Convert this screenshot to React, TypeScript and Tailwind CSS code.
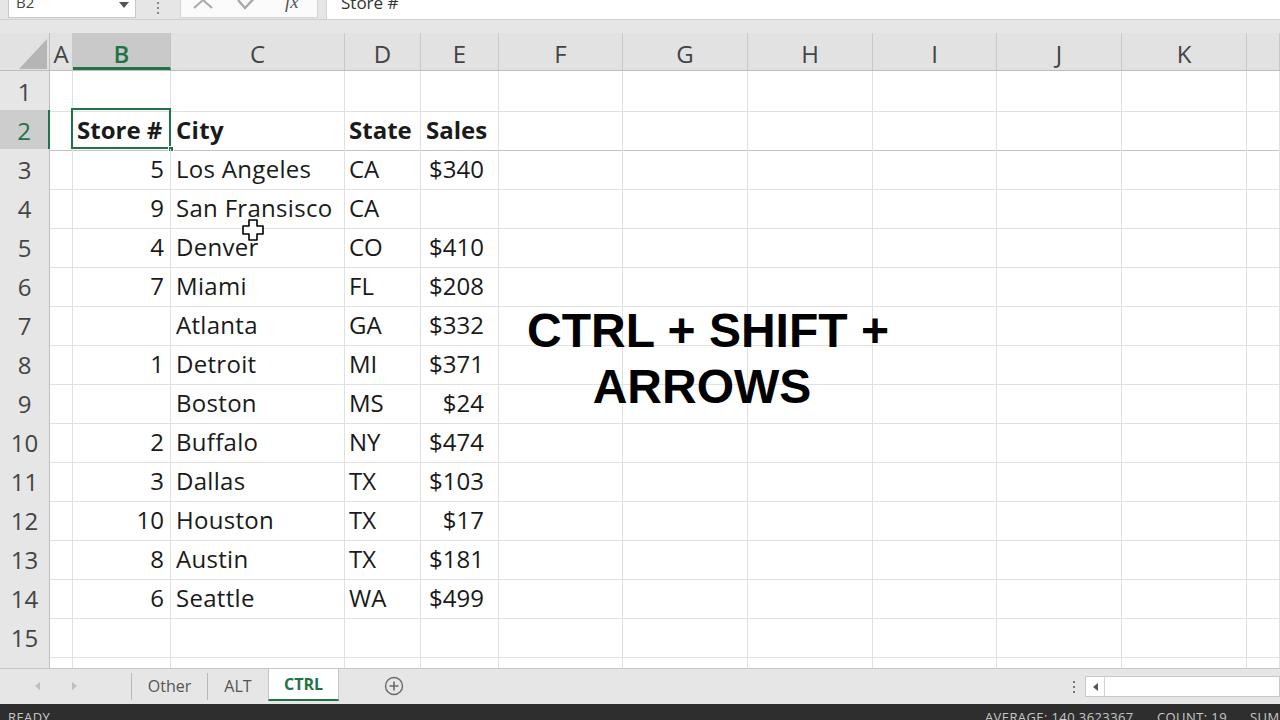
import React from 'react';

const COLS =
  'grid grid-cols-[50px_23px_98px_174px_76px_78px_124px_125px_125px_124px_125px_125px_1fr]';

type RowData = { n: number; b?: string; c?: string; d?: string; e?: string; header?: boolean };

const rows: RowData[] = [
  { n: 1 },
  { n: 2, b: 'Store #', c: 'City', d: 'State', e: 'Sales', header: true },
  { n: 3, b: '5', c: 'Los Angeles', d: 'CA', e: '$340' },
  { n: 4, b: '9', c: 'San Fransisco', d: 'CA', e: '' },
  { n: 5, b: '4', c: 'Denver', d: 'CO', e: '$410' },
  { n: 6, b: '7', c: 'Miami', d: 'FL', e: '$208' },
  { n: 7, b: '', c: 'Atlanta', d: 'GA', e: '$332' },
  { n: 8, b: '1', c: 'Detroit', d: 'MI', e: '$371' },
  { n: 9, b: '', c: 'Boston', d: 'MS', e: '$24' },
  { n: 10, b: '2', c: 'Buffalo', d: 'NY', e: '$474' },
  { n: 11, b: '3', c: 'Dallas', d: 'TX', e: '$103' },
  { n: 12, b: '10', c: 'Houston', d: 'TX', e: '$17' },
  { n: 13, b: '8', c: 'Austin', d: 'TX', e: '$181' },
  { n: 14, b: '6', c: 'Seattle', d: 'WA', e: '$499' },
  { n: 15 },
  { n: 16 },
];

const cellBase = 'border-r border-b border-[#e1e1e1] whitespace-nowrap leading-[39px] overflow-visible';

function Row({ r }: { r: RowData }) {
  const sel = r.n === 2;
  const rowBorder = sel ? 'border-b-[#c4c4c4]' : '';
  return (
    <div className={`${COLS} h-[39px] shrink-0 relative`}>
      <div
        className={`flex items-center justify-center border-b leading-[39px] pt-[1px] ${
          sel
            ? 'bg-[#cdcdcd] text-[#217346] border-r-2 border-r-[#217346] border-b-[#c4c4c4]'
            : 'bg-[#e6e6e6] text-[#444] border-r border-r-[#bdbdbd] border-b-[#d6d6d6]'
        }`}
      >
        {r.n}
      </div>
      <div className={`${cellBase} ${rowBorder}`}></div>
      <div
        className={`${cellBase} ${rowBorder} relative ${
          r.header ? 'pl-[4px] font-bold text-left' : 'pr-[6px] text-right'
        }`}
      >
        {r.b}
        {sel && (
          <div className="absolute left-[-2px] top-[-2px] w-[100px] h-[41px] border-2 border-[#217346] pointer-events-none">
            <div className="absolute right-[-5px] bottom-[-5px] w-[6px] h-[6px] bg-[#217346] border border-white"></div>
          </div>
        )}
      </div>
      <div className={`${cellBase} ${rowBorder} pl-[5px] tracking-[0.3px] ${r.header ? 'font-bold' : ''}`}>{r.c}</div>
      <div className={`${cellBase} ${rowBorder} pl-[4px] ${r.header ? 'font-bold' : ''}`}>{r.d}</div>
      <div
        className={`${cellBase} ${rowBorder} ${
          r.header ? 'pl-[5px] font-bold text-left' : 'pr-[14px] text-right'
        }`}
      >
        {r.e}
      </div>
      <div className={`${cellBase} ${rowBorder}`}></div>
      <div className={`${cellBase} ${rowBorder}`}></div>
      <div className={`${cellBase} ${rowBorder}`}></div>
      <div className={`${cellBase} ${rowBorder}`}></div>
      <div className={`${cellBase} ${rowBorder}`}></div>
      <div className={`${cellBase} ${rowBorder}`}></div>
      <div className={`${cellBase} ${rowBorder}`}></div>
    </div>
  );
}

const letters = ['A', 'B', 'C', 'D', 'E', 'F', 'G', 'H', 'I', 'J', 'K', ''];

export default function App() {
  return (
    <div
      className="w-[1280px] h-[720px] overflow-hidden relative bg-white flex flex-col text-[#1a1a1a]"
      style={{ fontFamily: '"Open Sans", "Noto Sans", sans-serif' }}
    >
      {/* Formula bar */}
      <div className="h-[20px] shrink-0 bg-[#e6e6e6] flex items-start overflow-hidden border-b border-[#cfcfcf]">
        <div className="ml-[8px] w-[128px] h-[18px] bg-white border border-t-0 border-[#c8c8c8] relative overflow-hidden">
          <span className="absolute left-[7px] top-[-6px] text-[15px] leading-[17px] text-[#444]">B2</span>
          <svg className="absolute right-[6px] top-[2px]" width="10" height="6" viewBox="0 0 10 6">
            <path d="M0 0 L10 0 L5 6 Z" fill="#555" />
          </svg>
        </div>
        <div className="w-[44px] h-[18px] flex flex-col items-center justify-start gap-[3px] pt-[2px]">
          <div className="w-[2px] h-[2px] bg-[#888]"></div>
          <div className="w-[2px] h-[2px] bg-[#888]"></div>
          <div className="w-[2px] h-[2px] bg-[#888]"></div>
        </div>
        <div className="w-[138px] h-[18px] bg-[#fbfbfb] border border-t-0 border-[#d4d4d4] relative overflow-hidden">
          <svg className="absolute left-[11px] top-[-8px]" width="22" height="18" viewBox="0 0 22 18">
            <path d="M2 0 L20 16 M20 0 L2 16" stroke="#a8a8a8" strokeWidth="2" fill="none" />
          </svg>
          <svg className="absolute left-[55px] top-[-8px]" width="24" height="18" viewBox="0 0 24 18">
            <path d="M2 8 L9 16 L23 1" stroke="#a8a8a8" strokeWidth="2.4" fill="none" />
          </svg>
          <span
            className="absolute left-[104px] top-[-9px] text-[19px] leading-[22px] italic text-[#555]"
            style={{ fontFamily: '"Liberation Serif", serif' }}
          >
            fx
          </span>
        </div>
        <div className="w-[8px]"></div>
        <div className="flex-1 h-[19px] bg-white border-l border-[#d4d4d4] relative overflow-hidden">
          <span className="absolute left-[14px] top-[-6px] text-[17px] leading-[17px] text-[#333]">Store #</span>
        </div>
      </div>

      {/* gray strip */}
      <div className="h-[13px] shrink-0 bg-[#e6e6e6]"></div>

      {/* Column headers */}
      <div className={`${COLS} h-[38px] shrink-0 bg-[#e2e2e2] border-b border-[#bdbdbd] text-[24px] text-[#444]`}>
        <div className="relative border-r border-[#bdbdbd]">
          <svg className="absolute left-[19px] top-[6px]" width="28" height="30" viewBox="0 0 28 30">
            <path d="M28 0 L28 30 L0 30 Z" fill="#b5b5b5" />
          </svg>
        </div>
        {letters.map((l, i) => (
          <div
            key={i}
            className={`flex justify-center leading-[36px] pt-[3px] overflow-hidden ${
              l === 'B'
                ? 'bg-[#c9c9c9] text-[#217346] font-semibold border-b-[3px] border-[#217346] border-r border-r-[#c2c2c2]'
                : 'border-r border-[#c9c9c9]'
            }`}
          >
            {l}
          </div>
        ))}
      </div>

      {/* Grid body */}
      <div className="flex-1 overflow-hidden flex flex-col text-[24px]">
        {rows.map((r) => (
          <Row key={r.n} r={r} />
        ))}
      </div>

      {/* Sheet tabs */}
      <div className="h-[36px] shrink-0 bg-[#e6e6e6] border-t border-[#c6c6c6] flex items-stretch text-[16px]">
        <div className="w-[131px] relative">
          <svg className="absolute left-[35px] top-[13px]" width="5" height="8" viewBox="0 0 5 8">
            <path d="M5 0 L0 4 L5 8 Z" fill="#bdbdbd" />
          </svg>
          <svg className="absolute left-[72px] top-[13px]" width="5" height="8" viewBox="0 0 5 8">
            <path d="M0 0 L5 4 L0 8 Z" fill="#bdbdbd" />
          </svg>
        </div>
        <div className="w-[1px] my-[4px] bg-[#b8b8b8]"></div>
        <div className="w-[75px] flex items-center justify-center text-[#555] pb-[1px]">Other</div>
        <div className="w-[1px] my-[4px] bg-[#b8b8b8]"></div>
        <div className="w-[60px] flex items-center justify-center text-[#555] pb-[1px]">ALT</div>
        <div className="w-[71px] mb-[3px] bg-white border-b-2 border-[#217346] border-l border-r border-l-[#c6c6c6] border-r-[#c6c6c6] flex items-center justify-center font-bold text-[#217346]">
          CTRL
        </div>
        <div className="ml-[45px] flex items-center pb-[1px]">
          <svg width="20" height="20" viewBox="0 0 20 20">
            <circle cx="10" cy="10" r="8.5" stroke="#6a6a6a" strokeWidth="1.4" fill="none" />
            <path d="M10 5.5 V14.5 M5.5 10 H14.5" stroke="#6a6a6a" strokeWidth="1.6" />
          </svg>
        </div>
        <div className="flex-1"></div>
        <div className="w-[20px] flex flex-col items-center justify-center gap-[3px] mr-[1px]">
          <div className="w-[2px] h-[2px] bg-[#777]"></div>
          <div className="w-[2px] h-[2px] bg-[#777]"></div>
          <div className="w-[2px] h-[2px] bg-[#777]"></div>
        </div>
        <div className="w-[195px] my-[7px] bg-white border border-[#c9c9c9] flex">
          <div className="w-[19px] border-r border-[#d2d2d2] flex items-center justify-center">
            <svg width="5" height="8" viewBox="0 0 5 8">
              <path d="M5 0 L0 4 L5 8 Z" fill="#555" />
            </svg>
          </div>
        </div>
      </div>

      {/* Status bar */}
      <div className="h-[16px] shrink-0 bg-[#2e2e2e] flex items-start overflow-hidden text-[13px] leading-[13px] text-[#c8c8c8] tracking-[0.4px]">
        <div className="w-[985px] shrink-0 pl-[8px] pt-[7px]">READY</div>
        <div className="w-[172px] shrink-0 pt-[7px] whitespace-nowrap">AVERAGE: 140.3623367</div>
        <div className="w-[93px] shrink-0 pt-[7px] whitespace-nowrap">COUNT: 19</div>
        <div className="shrink-0 pt-[7px] whitespace-nowrap">SUM: 2666</div>
      </div>

      {/* Big overlay text */}
      <div
        className="absolute left-[522px] top-[303px] w-[368px] text-center font-bold text-[48px] leading-[56px] text-black whitespace-nowrap"
        style={{ fontFamily: '"Liberation Sans", Arial, sans-serif' }}
      >
        <div className="pl-[4px]">CTRL + SHIFT +</div>
        <div className="pr-[8px]">ARROWS</div>
      </div>

      {/* Mouse cursor */}
      <svg className="absolute left-[242px] top-[219px]" width="22" height="22" viewBox="0 0 22 22">
        <path
          d="M7 1 H15 V7 H21 V15 H15 V21 H7 V15 H1 V7 H7 Z"
          fill="white"
          stroke="black"
          strokeWidth="1.6"
          strokeLinejoin="round"
        />
      </svg>
    </div>
  );
}
